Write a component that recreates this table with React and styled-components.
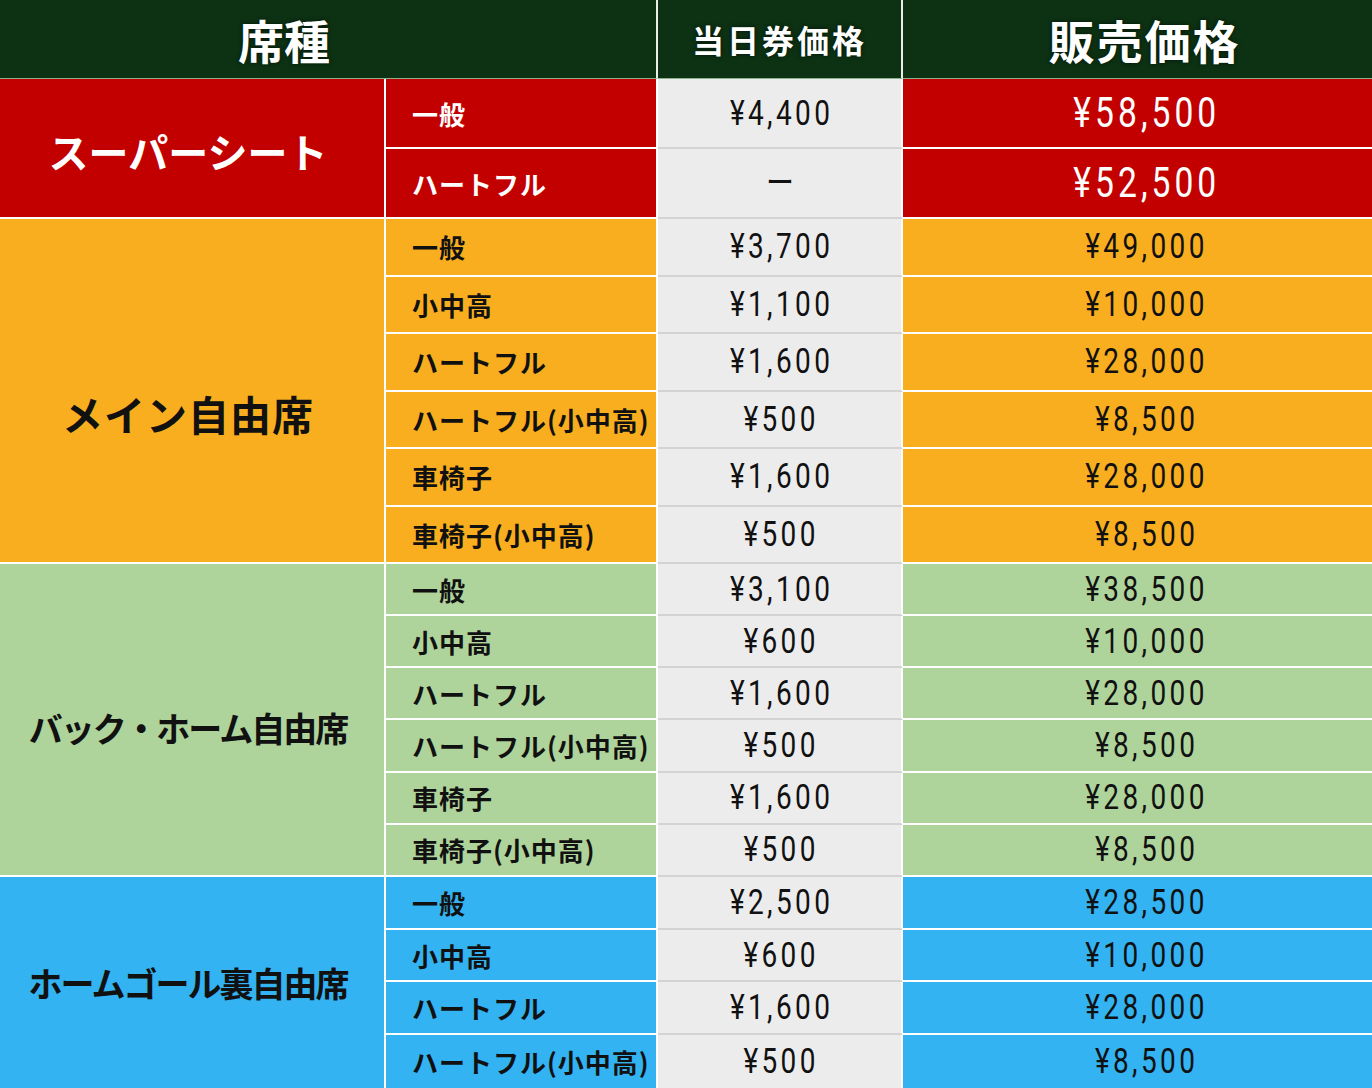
import React from 'react'
import styled, { createGlobalStyle } from 'styled-components'

const GlobalStyle = createGlobalStyle`
  html, body {
    margin: 0;
    padding: 0;
    background: #ffffff;
  }
  body {
    width: 1372px;
    height: 1088px;
    overflow: hidden;
    font-family: "Noto Sans CJK JP", "Noto Sans", sans-serif;
  }
`

const groups = [
  {
    name: 'スーパーシート',
    bg: '#c30000',
    fg: '#ffffff',
    rowH: 70,
    nameSize: 40,
    nameSpacing: 0,
    nameShift: 6,
    priceSize: 42,
    rows: [
      ['一般', '¥4,400', '¥58,500'],
      ['ハートフル', 'ー', '¥52,500'],
    ],
  },
  {
    name: 'メイン自由席',
    bg: '#f8ae1e',
    fg: '#111111',
    rowH: 57.5,
    nameSize: 41,
    nameSpacing: 1,
    nameShift: 44,
    priceSize: 35,
    rows: [
      ['一般', '¥3,700', '¥49,000'],
      ['小中高', '¥1,100', '¥10,000'],
      ['ハートフル', '¥1,600', '¥28,000'],
      ['ハートフル(小中高)', '¥500', '¥8,500'],
      ['車椅子', '¥1,600', '¥28,000'],
      ['車椅子(小中高)', '¥500', '¥8,500'],
    ],
  },
  {
    name: 'バック・ホーム自由席',
    bg: '#afd49b',
    fg: '#111111',
    rowH: 52.17,
    nameSize: 34,
    nameSpacing: -2,
    nameShift: 16,
    priceSize: 35,
    rows: [
      ['一般', '¥3,100', '¥38,500'],
      ['小中高', '¥600', '¥10,000'],
      ['ハートフル', '¥1,600', '¥28,000'],
      ['ハートフル(小中高)', '¥500', '¥8,500'],
      ['車椅子', '¥1,600', '¥28,000'],
      ['車椅子(小中高)', '¥500', '¥8,500'],
    ],
  },
  {
    name: 'ホームゴール裏自由席',
    bg: '#33b3f2',
    fg: '#111111',
    rowH: 52.75,
    nameSize: 34,
    nameSpacing: -2,
    nameShift: 0,
    priceSize: 35,
    rows: [
      ['一般', '¥2,500', '¥28,500'],
      ['小中高', '¥600', '¥10,000'],
      ['ハートフル', '¥1,600', '¥28,000'],
      ['ハートフル(小中高)', '¥500', '¥8,500'],
    ],
  },
]

const rowTemplate = [
  '79px',
  ...groups.flatMap(g => g.rows.map(() => `${g.rowH}px`)),
].join(' ')

const App = () => {
  const total = groups.reduce((n, g) => n + g.rows.length, 0)
  let index = 0

  return (
    <>
      <GlobalStyle />
      <Table $rows={rowTemplate}>
        <HeadCell $col='1 / span 2' $size={46} $shift={-88} $divider>
          席種
        </HeadCell>
        <HeadCell $col='3' $size={32} $spacing={3} $divider>
          当日券価格
        </HeadCell>
        <HeadCell $col='4' $size={46} $spacing={2} $shift={14}>
          販売価格
        </HeadCell>

        {groups.map(group => (
          <React.Fragment key={group.name}>
            <SeatCell
              $span={group.rows.length}
              $bg={group.bg}
              $fg={group.fg}
              $size={group.nameSize}
              $spacing={group.nameSpacing}
              $shift={group.nameShift}
              $last={index + group.rows.length === total}
            >
              {group.name}
            </SeatCell>
            {group.rows.map(([label, door, price]) => {
              index += 1
              const last = index === total
              return (
                <React.Fragment key={label}>
                  <LabelCell $bg={group.bg} $fg={group.fg} $last={last}>
                    {label}
                  </LabelCell>
                  <DoorCell $last={last}>
                    <Num $size={35}>{door}</Num>
                  </DoorCell>
                  <PriceCell $bg={group.bg} $fg={group.fg} $last={last}>
                    <Num $size={group.priceSize}>{price}</Num>
                  </PriceCell>
                </React.Fragment>
              )
            })}
          </React.Fragment>
        ))}
      </Table>
    </>
  )
}

export default App

const Table = styled.div`
  display: grid;
  grid-template-columns: 386px 272px 245px 1fr;
  grid-template-rows: ${p => p.$rows};
  width: 1372px;
  height: 1088px;
`

const HeadCell = styled.div`
  grid-column: ${p => p.$col};
  display: flex;
  align-items: center;
  justify-content: center;
  box-sizing: border-box;
  padding-left: ${p => (p.$shift > 0 ? p.$shift : 0)}px;
  padding-right: ${p => (p.$shift < 0 ? -p.$shift : 0)}px;

  background: #0c3113;
  border-bottom: 1px solid #8db08f;
  border-right: ${p => (p.$divider ? '2px solid #e8efe8' : 'none')};

  color: #ffffff;
  font-size: ${p => p.$size}px;
  font-weight: 700;
  letter-spacing: ${p => p.$spacing || 0}px;
  text-shadow: 0 0 4px rgba(0, 0, 0, 0.6);
`

const SeatCell = styled.div`
  grid-column: 1;
  grid-row: span ${p => p.$span};
  display: flex;
  align-items: center;
  justify-content: center;
  box-sizing: border-box;
  padding-top: ${p => p.$shift}px;
  padding-right: 8px;

  background: ${p => p.$bg};
  border-right: 2px solid #ffffff;
  border-bottom: ${p => (p.$last ? 'none' : '2px solid #ffffff')};

  color: ${p => p.$fg};
  font-size: ${p => p.$size}px;
  font-weight: 700;
  letter-spacing: ${p => p.$spacing}px;
  white-space: nowrap;
`

const LabelCell = styled.div`
  grid-column: 2;
  display: flex;
  align-items: center;
  box-sizing: border-box;
  padding-left: 26px;

  background: ${p => p.$bg};
  border-right: 2px solid #ffffff;
  border-bottom: ${p => (p.$last ? 'none' : '2px solid #ffffff')};

  color: ${p => p.$fg};
  font-size: 26px;
  font-weight: 700;
  letter-spacing: 1px;
  white-space: nowrap;
`

const DoorCell = styled.div`
  grid-column: 3;
  display: flex;
  align-items: center;
  justify-content: center;
  box-sizing: border-box;

  background: #ececec;
  border-right: 2px solid #ffffff;
  border-bottom: ${p => (p.$last ? 'none' : '2px solid #d3d3d3')};

  color: #111111;
`

const PriceCell = styled.div`
  grid-column: 4;
  display: flex;
  align-items: center;
  justify-content: center;
  box-sizing: border-box;
  padding-left: 14px;

  background: ${p => p.$bg};
  border-bottom: ${p => (p.$last ? 'none' : '2px solid #ffffff')};

  color: ${p => p.$fg};
`

const Num = styled.span`
  display: inline-block;
  transform: scaleX(0.8);
  font-family: Roboto, "Noto Sans CJK JP", sans-serif;
  font-size: ${p => p.$size}px;
  font-weight: 400;
  letter-spacing: 0.12em;
  margin-right: -0.12em;
  line-height: 1;
  white-space: nowrap;
`
